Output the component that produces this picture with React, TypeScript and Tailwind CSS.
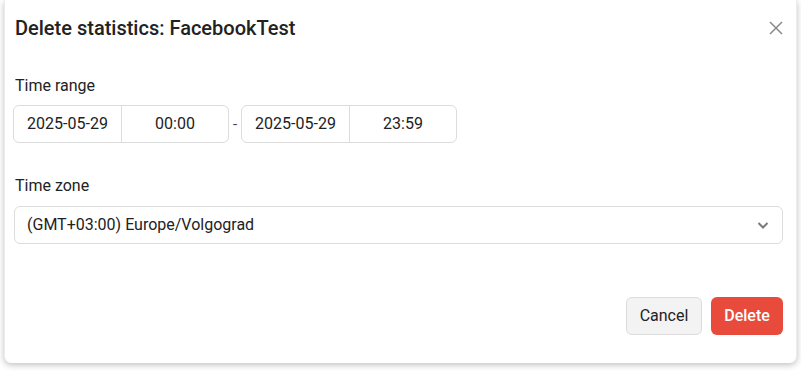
// Delete statistics modal
const font = { fontFamily: 'Roboto, "Liberation Sans", sans-serif' };

function TimeGroup({ date, time }: { date: string; time: string }) {
  return (
    <div className="flex h-[38px] rounded-[6px] border border-[#dcdcdc] bg-white text-[16px] text-[#222]">
      <div className="flex w-[108px] items-center justify-center border-r border-[#dcdcdc]">{date}</div>
      <div className="flex w-[106px] items-center justify-center">{time}</div>
    </div>
  );
}

export default function App() {
  return (
    <div className="min-h-[371px] bg-white px-[4px] pb-[8px]" style={font}>
      <div className="flex flex-col rounded-b-[7px] border-l border-r border-[#ececec] bg-white shadow-[0_2px_6px_rgba(0,0,0,0.25)]">
        {/* header */}
        <div className="flex h-[55px] items-center justify-between pl-[10px] pr-[10px]">
          <h1 className="text-[20px] font-medium text-[#222]">Delete statistics: FacebookTest</h1>
          <button type="button" className="flex h-[20px] w-[20px] items-center justify-center text-[#8a8a8a]" aria-label="Close">
            <svg width="16" height="16" viewBox="0 0 16 16" fill="none" stroke="currentColor" strokeWidth="1.5">
              <path d="M2 2 L14 14 M14 2 L2 14" />
            </svg>
          </button>
        </div>

        {/* body */}
        <div className="flex flex-col px-[8px] pt-[19px]">
          <label className="pl-[2px] text-[16px] leading-[24px] text-[#222]">Time range</label>
          <div className="mt-[7px] flex items-center">
            <TimeGroup date="2025-05-29" time="00:00" />
            <span className="w-[12px] text-center text-[15px] text-[#444]">-</span>
            <TimeGroup date="2025-05-29" time="23:59" />
          </div>

          <label className="mt-[31px] pl-[2px] text-[16px] leading-[24px] text-[#222]">Time zone</label>
          <div className="mt-[8px] ml-[1px] mr-[5px] flex h-[38px] items-center justify-between rounded-[6px] border border-[#dcdcdc] pl-[12px] pr-[12px] text-[16px] text-[#222]">
            <span>(GMT+03:00) Europe/Volgograd</span>
            <svg width="14" height="14" viewBox="0 0 14 14" fill="none" stroke="#7a7a7a" strokeWidth="2">
              <path d="M2.5 5 L7 9.5 L11.5 5" />
            </svg>
          </div>
        </div>

        {/* footer */}
        <div className="flex justify-end gap-[9px] pr-[13px] pb-[28px] pt-[53px]">
          <button type="button" className="h-[38px] w-[76px] rounded-[6px] border border-[#dcdcdc] bg-[#f3f3f3] text-[16px] text-[#222]">
            Cancel
          </button>
          <button type="button" className="h-[38px] w-[72px] rounded-[6px] bg-[#e84b3c] text-[16px] font-medium text-white">
            Delete
          </button>
        </div>
      </div>
    </div>
  );
}
